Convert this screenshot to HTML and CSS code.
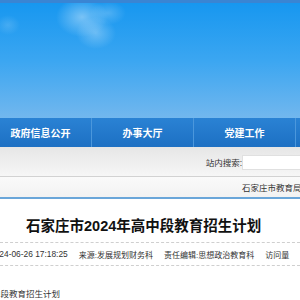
FILE: index.html
```html
<!DOCTYPE html>
<html lang="zh-CN">
<head>
  <meta charset="UTF-8">
  <title>石家庄市2024年高中段教育招生计划</title>
  <link rel="stylesheet" href="styles.css">
</head>
<body>
  <div class="topline"></div>
  <header class="banner"></header>

  <nav class="nav">
    <a href="#">政府信息公开</a>
    <a href="#">办事大厅</a>
    <a href="#">党建工作</a>
  </nav>

  <div class="searchbar">
    <label>站内搜索:</label>
    <input type="text">
  </div>

  <div class="crumbs">
    <span>石家庄市教育局</span>
  </div>

  <main class="article">
    <h1>石家庄市2024年高中段教育招生计划</h1>
    <div class="meta">
      <span class="time">2024-06-26 17:18:25</span>
      <span>来源:发展规划财务科</span>
      <span>责任编辑:思想政治教育科</span>
      <span>访问量</span>
    </div>
    <p class="body">石家庄市2024年高中段教育招生计划</p>
  </main>
</body>
</html>
```

FILE: styles.css
```css
* {
  margin: 0; padding: 0; box-sizing: border-box;
  font-family: "Liberation Sans", "Noto Sans CJK SC", sans-serif;
}
body {
  background: #fff;
  color: #333;
  width: 300px;
  overflow: hidden;
}
.topline {
  height: 3px;
  background: #3a85d3;
}
.banner {
  height: 115px;
  background:
    radial-gradient(ellipse 26px 20px at 82px 14px, rgba(255,255,255,0.4), rgba(255,255,255,0) 100%),
    radial-gradient(ellipse 20px 16px at 96px 30px, rgba(255,255,255,0.3), rgba(255,255,255,0) 100%),
    radial-gradient(ellipse 18px 12px at 108px 10px, rgba(255,255,255,0.22), rgba(255,255,255,0) 100%),
    radial-gradient(ellipse 12px 10px at 8px 22px, rgba(255,255,255,0.15), rgba(255,255,255,0) 100%),
    linear-gradient(#1797f0, #3ba6f1 50%, #72b7ee);
}
.nav {
  display: flex;
  height: 29px;
  margin-left: -10px;
  background: linear-gradient(#2a82d4, #1d70c3);
}
.nav a {
  flex: 0 0 102px;
  display: flex;
  align-items: center;
  justify-content: center;
  color: #fff;
  font-size: 10px;
  font-weight: bold;
  text-decoration: none;
  border-right: 1px solid #4b97dc;
}
.searchbar {
  height: 30px;
  display: flex;
  align-items: center;
  justify-content: flex-end;
  padding-top: 1px;
  background: linear-gradient(#e6e6e6, #f6f6f6);
  border-bottom: 1px solid #d2d2d2;
}
.searchbar label {
  font-size: 8.5px;
  color: #333;
}
.searchbar input {
  width: 58px;
  height: 15px;
  border: 1px solid #e0e0e0;
  border-right: none;
  background: #fff;
}
.crumbs {
  height: 22px;
  display: flex;
  align-items: center;
  padding-left: 242px;
  background: linear-gradient(#fafafa, #f2f2f2);
  border-bottom: 2px solid #6aa6d9;
  white-space: nowrap;
}
.crumbs span {
  font-size: 8.5px;
  color: #333;
}
.article h1 {
  padding: 15px 0 0 26px;
  height: 44px;
  font-size: 14.5px;
  font-weight: bold;
  color: #111;
  white-space: nowrap;
  border-bottom: 1px dashed #cfcfcf;
}
.meta {
  display: flex;
  gap: 11px;
  height: 23px;
  align-items: center;
  margin-left: -10px;
  white-space: nowrap;
  font-size: 8px;
  color: #333;
  border-bottom: 1px dashed #cfcfcf;
}
.meta .time {
  font-size: 8.4px;
}
.body {
  margin: 21px 0 0 -78px;
  font-size: 8.5px;
  white-space: nowrap;
}
```
